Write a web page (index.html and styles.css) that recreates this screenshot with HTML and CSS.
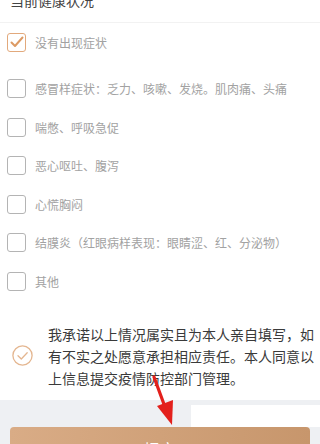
FILE: index.html
```html
<!DOCTYPE html>
<html lang="zh-CN">
<head>
    <meta charset="UTF-8">
    <meta name="viewport" content="width=device-width, initial-scale=1.0">
    <title>当前健康状况</title>
    <link rel="stylesheet" href="styles.css">
</head>
<body>
    <div class="page">
        <div class="head">当前健康状况</div>

        <div class="options">
            <label class="option first">
                <span class="box checked">
                    <svg width="14" height="12" viewBox="0 0 14 12"><path d="M1.5 6.5 L5 10 L12.5 1.5" fill="none" stroke="#dc9a64" stroke-width="2" stroke-linecap="round" stroke-linejoin="round"/></svg>
                </span>
                <span class="text">没有出现症状</span>
            </label>
            <label class="option"><span class="box"></span><span class="text">感冒样症状：乏力、咳嗽、发烧。肌肉痛、头痛</span></label>
            <label class="option"><span class="box"></span><span class="text">喘憋、呼吸急促</span></label>
            <label class="option"><span class="box"></span><span class="text">恶心呕吐、腹泻</span></label>
            <label class="option"><span class="box"></span><span class="text">心慌胸闷</span></label>
            <label class="option"><span class="box"></span><span class="text">结膜炎（红眼病样表现：眼睛涩、红、分泌物）</span></label>
            <label class="option"><span class="box"></span><span class="text">其他</span></label>
        </div>

        <div class="promise">
            <span class="circle">
                <svg width="21" height="21" viewBox="0 0 21 21"><circle cx="10.5" cy="10.5" r="9.6" fill="none" stroke="#e4b690" stroke-width="1.3"/><path d="M6 10.8 L9.3 14 L15.2 7.8" fill="none" stroke="#e4b690" stroke-width="1.3" stroke-linecap="round" stroke-linejoin="round"/></svg>
            </span>
            <p class="promise-text">我承诺以上情况属实且为本人亲自填写，如有不实之处愿意承担相应责任。本人同意以上信息提交疫情防控部门管理。</p>
        </div>
    </div>

    <div class="footer">
        <div class="patch"></div>
        <button class="submit">提交</button>
    </div>

    <svg class="arrow" width="40" height="60" viewBox="0 0 40 60">
        <path d="M8 6 L19 36" stroke="#e3201c" stroke-width="3.2" stroke-linecap="round"/>
        <polygon points="11,35 27,29 26,54" fill="#e3201c"/>
    </svg>
</body>
</html>
```
FILE: styles.css
```css
body {
    margin: 0;
    font-family: "Noto Sans CJK SC", "Noto Sans", sans-serif;
    background: #eef0f3;
    overflow: hidden;
    position: relative;
    height: 444px;
}

.page {
    background: #fff;
}

.head {
    margin-top: -11px;
    height: 33px;
    line-height: 22px;
    padding-left: 10px;
    font-size: 14px;
    color: #444;
    border-bottom: 1px solid #f2f2f2;
}

.options {
    display: flex;
    flex-direction: column;
}

.option {
    display: flex;
    align-items: center;
    height: 38.5px;
    padding-left: 7px;
}

.option.first {
    margin-bottom: 8px;
}

.box {
    width: 17px;
    height: 17px;
    border: 1.5px solid #b4b4b4;
    border-radius: 3px;
    display: flex;
    align-items: center;
    justify-content: center;
    flex-shrink: 0;
}

.box.checked {
    border-color: #e2a97c;
}

.text {
    margin-left: 9px;
    font-size: 12px;
    color: #a2a2a2;
    white-space: nowrap;
}

.promise {
    display: flex;
    align-items: center;
    padding: 22px 4px 11px 12px;
}

.circle {
    width: 21px;
    height: 21px;
    flex-shrink: 0;
    margin-right: 15px;
    display: flex;
}

.promise-text {
    margin: 0;
    font-size: 14px;
    line-height: 22px;
    color: #3a3a3a;
}

.footer {
    position: relative;
    padding: 27px 10px 0;
}

.patch {
    position: absolute;
    left: 191px;
    right: 0;
    top: 5px;
    height: 22px;
    background: #fff;
}

.submit {
    display: block;
    width: 100%;
    height: 44px;
    border: none;
    border-radius: 4px;
    background: linear-gradient(90deg, #d9ac86, #c7966c);
    color: #fff;
    font-family: inherit;
    font-size: 16px;
    line-height: 44px;
    padding: 0;
}

.arrow {
    position: absolute;
    left: 146px;
    top: 371px;
}
```
